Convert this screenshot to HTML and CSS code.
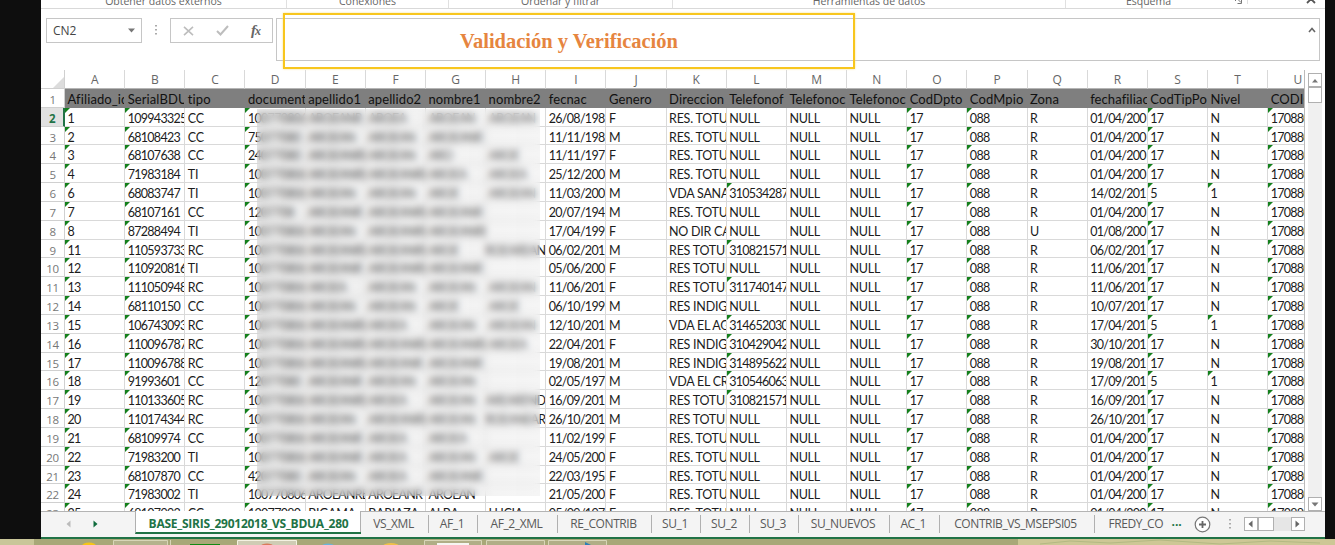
FILE: index.html
```html
<!DOCTYPE html>
<html lang="es">
<head>
<meta charset="utf-8">
<title>BASE_SIRIS_29012018_VS_BDUA_280</title>
<link rel="stylesheet" href="styles.css">
</head>
<body>
<main class="window">
  <div class="ribbon">
    <span class="group g1">Obtener datos externos</span>
    <span class="group g2">Conexiones</span>
    <span class="group g3">Ordenar y filtrar</span>
    <span class="group g4">Herramientas de datos</span>
    <span class="group g5">Esquema</span>
    <span class="launcher"><svg width="8" height="8" viewBox="0 0 8 8"><path d="M.5 4V.5H4M3 2.5l3 3M6.5 2.5v4h-4" fill="none" stroke="#777"/></svg></span>
    <svg class="collapse" width="10" height="6" viewBox="0 0 10 6"><path d="M1 5l4-4 4 4" fill="none" stroke="#555" stroke-width="1.8"/></svg>
  </div>
  <div class="formula">
    <div class="namebox"><span>CN2</span><svg width="8" height="5" viewBox="0 0 8 5"><path d="M0 .5h7L3.500 4.500z" fill="#777"/></svg></div>
    <svg class="grip" width="3" height="12" viewBox="0 0 3 12"><path d="M1 1h2v1.500H1zM1 5h2v1.500H1zM1 9h2v1.500H1z" fill="#aaa"/></svg>
    <div class="fbuttons">
      <svg width="11" height="10" viewBox="0 0 11 10"><path d="M1 .8l9 8.400M10 .8L1 9.200" stroke="#bdbdbd" stroke-width="1.600"/></svg>
      <svg width="13" height="11" viewBox="0 0 13 11"><path d="M1 6l3.500 3.500L12 1" fill="none" stroke="#bdbdbd" stroke-width="2"/></svg>
      <span class="fx">f<small>x</small></span>
    </div>
    <div class="finput"><svg width="8" height="6" viewBox="0 0 8 6"><path d="M1 5l3-3.500L7 5" fill="none" stroke="#666" stroke-width="1.600"/></svg></div>
    <div class="callout">Validación y Verificación</div>
  </div>
  <div class="workarea">
    <div class="sheet" id="sheet"></div>
    <div class="vscroll">
      <span class="sbtn"><svg width="8" height="5" viewBox="0 0 8 5"><path d="M1 4.500L4 1l3 3.500z" fill="#777"/></svg></span>
      <span class="vthumb"></span>
      <span class="vtrack"></span>
      <span class="sbtn"><svg width="8" height="5" viewBox="0 0 8 5"><path d="M.5.500h7L4 4.500z" fill="#777"/></svg></span>
    </div>
  </div>
  <div class="tabs">
    <div class="nav">
      <svg width="5" height="8" viewBox="0 0 5 8"><path d="M4.500.5v7L.5 4z" fill="#bbb"/></svg>
      <svg width="5" height="8" viewBox="0 0 5 8"><path d="M.5.5v7l4-3.500z" fill="#0f6b3c"/></svg>
    </div>
    <div class="tab active">BASE_SIRIS_29012018_VS_BDUA_280</div>
    <div class="tab w68">VS_XML</div>
    <div class="tab w49">AF_1</div>
    <div class="tab w80">AF_2_XML</div>
    <div class="tab w94">RE_CONTRIB</div>
    <div class="tab w49">SU_1</div>
    <div class="tab w49">SU_2</div>
    <div class="tab w49">SU_3</div>
    <div class="tab w91">SU_NUEVOS</div>
    <div class="tab w50">AC_1</div>
    <div class="tab w155">CONTRIB_VS_MSEPSI05</div>
    <div class="tab last"><span>FREDY_CO</span></div>
    <span class="more">...</span>
    <svg class="add" width="17" height="17" viewBox="0 0 17 17"><circle cx="8.500" cy="8.500" r="7.300" fill="#fff" stroke="#777" stroke-width="1.200"/><path d="M8.500 5v7M5 8.500h7" stroke="#666" stroke-width="1.800"/></svg>
    <svg class="grip2" width="3" height="12" viewBox="0 0 3 12"><path d="M1 1h2v1.500H1zM1 5h2v1.500H1zM1 9h2v1.500H1z" fill="#aaa"/></svg>
    <div class="hscroll">
      <span class="sbtn"><svg width="5" height="8" viewBox="0 0 5 8"><path d="M4.500.5v7L.5 4z" fill="#666"/></svg></span>
      <span class="hthumb"></span>
      <span class="htrack"></span>
      <span class="sbtn"><svg width="5" height="8" viewBox="0 0 5 8"><path d="M.5.5v7l4-3.500z" fill="#666"/></svg></span>
    </div>
  </div>
</main>
<footer class="taskbar">
  <svg width="1335" height="6" viewBox="0 0 1335 6">
    <rect width="1335" height="6" fill="#a8a878"/>
    <rect width="34" height="6" fill="#c9c699"/>
    <path d="M1018 0h317v6h-317z" fill="#cdc795"/>
    <path d="M1040 5l30-3 40 2 50-3 60 4 50-3 50 2" stroke="#b3b982" fill="none"/>
    <ellipse cx="89" cy="7" rx="7" ry="3.500" fill="#f5c518"/>
    <path d="M113.500 6V1.500h54V6M170.500 1v5" fill="#b5b38d" stroke="#d8d6b8"/>
    <rect x="190" y="5" width="30" height="1" fill="#128a12"/>
    <path d="M237.500 6V1.500h59V6" fill="#cfccb4" stroke="#f4f2e2"/>
    <ellipse cx="267" cy="7" rx="6" ry="2.500" fill="#d97a5a"/>
    <ellipse cx="328" cy="7" rx="6" ry="2.500" fill="#69b4d8"/>
    <ellipse cx="391" cy="7" rx="8" ry="3" fill="#efc04a"/>
    <path d="M424.500 6V1.500h57V6M486.500 6V1.500h58V6M548.500 6V1.500h58V6" fill="#b0ae86" stroke="#d8d6b8"/>
    <rect x="437" y="4" width="32" height="2" fill="#f6f6f2"/>
    <path d="M585 3l6 3h-6z" fill="#2d7fb5"/>
  </svg>
</footer>
<script src="sheet.js"></script>
</body>
</html>
```
FILE: styles.css
```css
* { box-sizing: border-box; }
body {
  margin: 0;
  width: 1335px;
  height: 545px;
  overflow: hidden;
  background: #0e0e0e;
  font-family: "Open Sans", "Noto Sans", sans-serif;
  color: #222;
}
svg { display: block; flex: none; }
.window {
  margin-left: 41px;
  width: 1284px;
  height: 539px;
  background: #fff;
  border-bottom: 2px solid #217346;
  display: flex;
  flex-direction: column;
}
.taskbar { height: 6px; }

/* ribbon */
.ribbon {
  height: 9px;
  flex: none;
  display: flex;
  border-bottom: 1px solid #d9d9d9;
  overflow: hidden;
  font-size: 10.5px;
  line-height: 14px;
  color: #666;
}
.group {
  height: 14px;
  margin-top: -6px;
  text-align: center;
  flex: none;
  border-right: 1px solid #e0e0e0;
  white-space: nowrap;
}
.g1 { width: 246px; }
.g2 { width: 162px; }
.g3 { width: 224px; }
.g4 { width: 393px; }
.g5 { width: 165px; border-right: 0; }
.launcher { width: 17px; margin-top: -3px; padding-left: 4px; height: 7px; border-right: 1px solid #e0e0e0; }
.collapse { margin: -2px 0 0 58px; }

/* formula bar */
.formula {
  position: relative;
  height: 61px;
  flex: none;
  display: flex;
  padding: 9px 5px 0 5px;
}
.namebox {
  width: 96px;
  height: 25px;
  border: 1px solid #c6c6c6;
  display: flex;
  align-items: center;
  justify-content: space-between;
  padding: 0 5px 0 6px;
  font-size: 12px;
  color: #444;
}
.grip { margin: 6px 13px 0 12px; }
.fbuttons {
  width: 103px;
  height: 25px;
  border: 1px solid #c6c6c6;
  display: flex;
  align-items: center;
  padding-left: 12px;
  gap: 22px;
}
.fx { font: italic bold 15px/20px "Liberation Serif", serif; color: #666; letter-spacing: -1px; }
.fx small { font-size: 12px; }
.finput {
  margin-left: 3px;
  flex: 1;
  height: 43px;
  border: 1px solid #c6c6c6;
  display: flex;
  justify-content: flex-end;
  padding: 8px 3px 0 0;
}
.callout {
  position: absolute;
  left: 242px;
  top: 4px;
  width: 572px;
  height: 56px;
  border: 2px solid #f8c61e;
  box-shadow: 0 0 2px #f6e28a;
  font: bold 20.5px/53px "Liberation Serif", serif;
  color: #e6853f;
  text-align: center;
}

/* grid */
.workarea { height: 441px; flex: none; display: flex; }
.sheet {
  position: relative;
  width: 1264px;
  height: 441px;
  overflow: hidden;
  border-right: 1px solid #bbb;
  font-family: Lato, sans-serif;
  font-size: 12.5px;
}
.line { display: grid; grid-template-columns: 24px repeat(21, 60.16px); height: 18.83px; }
.line.letters { height: 19px; }
.cell {
  position: relative;
  min-width: 0;
  overflow: hidden;
  white-space: pre;
  padding-left: 2.5px;
  line-height: 21px;
  border-right: 1px solid #d9d9d9;
  border-bottom: 1px solid #d9d9d9;
  color: #1c1c1c;
  letter-spacing: -0.25px;
}
.num { letter-spacing: -0.7px; }
.name { letter-spacing: -0.8px; }
.tail { direction: rtl; padding: 0; }
.flag::before {
  content: "";
  position: absolute;
  left: 0;
  top: 0;
  border-top: 5px solid #14801c;
  border-right: 5px solid transparent;
}
.titles .cell { background: #7f7f7f; border-color: #7f7f7f; color: #111; font-size: 13px; letter-spacing: 0.1px; }
.letters .cell {
  text-align: center;
  padding: 0;
  font: 12px/20px "Open Sans", sans-serif;
  color: #666;
  border-bottom-color: #b5b5b5;
}
.line .index {
  background: #fff;
  font: 11.5px/21px "Open Sans", sans-serif;
  letter-spacing: -0.4px;
  text-align: center;
  padding: 0;
  color: #777;
  border-color: #d0d0d0;
}
.line .index.current {
  background: #e1e1e1;
  color: #217346;
  font-weight: 700;
  border-right: 2px solid #217346;
}
.corner { display: flex; align-items: flex-end; justify-content: flex-end; padding: 0 3px 3px 0; }
.redacted {
  position: absolute;
  left: 216px;
  top: 39px;
  width: 283px;
  height: 387px;
  background: linear-gradient(90deg, rgba(190,190,190,.28), rgba(222,222,222,.3));
  backdrop-filter: blur(3.5px);
}

/* scroll bars */
.vscroll {
  width: 14px;
  margin: 3px 0 0 3px;
  display: flex;
  flex-direction: column;
}
.sbtn {
  width: 14px;
  height: 14px;
  flex: none;
  border: 1px solid #b0b0b0;
  background: #fff;
  display: flex;
  align-items: center;
  justify-content: center;
}
.vthumb { height: 16px; border: 1px solid #b0b0b0; background: #fff; }
.vtrack { flex: 1; background: #f0f0f0; }

/* sheet tabs */
.tabs {
  flex: 1;
  display: flex;
  background: #f4f4f4;
  border-top: 1px solid #b4b4b4;
  font-size: 12px;
  color: #595959;
}
.nav { width: 94px; display: flex; gap: 22px; padding: 8px 0 0 25px; }
.tab {
  position: relative;
  height: 22px;
  line-height: 23px;
  padding-right: 3px;
  text-align: center;
  white-space: nowrap;
  letter-spacing: -0.4px;
  flex: none;
}
.tab::after {
  content: "";
  position: absolute;
  right: 0;
  top: 3px;
  height: 18px;
  border-right: 1px solid #b0b0b0;
}
.tab.active {
  width: 226px;
  margin-top: -1px;
  height: 23px;
  padding-right: 0;
  background: #fff;
  border-left: 1px solid #b0b0b0;
  border-bottom: 2px solid #217346;
  color: #217346;
  font-weight: 700;
  font-size: 12px;
  line-height: 25px;
  letter-spacing: -0.25px;
}
.tab.active::after { top: 0; height: 21px; }
.w49 { width: 49px; }
.w50 { width: 49.5px; }
.w68 { width: 68px; }
.w80 { width: 80px; }
.w91 { width: 91px; }
.w94 { width: 94px; }
.w155 { width: 155px; }
.tab.last { width: 70px; padding-left: 14px; text-align: left; }
.tab.last::after { display: none; }
.last span { display: block; width: 55px; overflow: hidden; }
.more { width: 11px; margin-left: 7px; color: #217346; font-weight: 700; line-height: 20px; }
.add { margin: 4px 0 0 11px; }
.grip2 { margin: 6px 0 0 17px; }
.hscroll { display: flex; height: 14px; margin: 5px 0 0 13px; }
.hthumb { width: 16px; border: 1px solid #b0b0b0; background: #fff; }
.htrack { width: 17px; background: #e6e6e6; }
```
FILE: sheet.js
```js
const titles = ["Afiliado_id", "SerialBDU", "tipo", "document", "apellido1", "apellido2", "nombre1", "nombre2", "fecnac", "Genero", "Direccion", "Telefonof", "Telefonoc", "Telefonoc", "CodDpto", "CodMpio", "Zona", "fechafiliac", "CodTipPol", "Nivel", "CODIGO"];
// id | serial | tipo | documento prefix | masked lengths | fecnac | genero | direccion | telefono | zona | afiliacion | poblacion | nivel
const rows = [
  "1|109943325|CC|10|9,7,5,6,6|26/08/198|F|RES. TOTU|NULL|R|01/04/200|17|N",
  "2|68108423|CC|75|6,6,6,7,0|11/11/198|M|RES. TOTU|NULL|R|01/04/200|17|N",
  "3|68107638|CC|24|6,8,6,3,4|11/11/197|F|RES. TOTU|NULL|R|01/04/200|17|N",
  "4|71983184|TI|10|9,8,8,5,5|25/12/200|M|RES. TOTU|NULL|R|01/04/200|17|N",
  "6|68083747|TI|10|9,6,6,4,6|11/03/200|M|VDA SANAM|310534287|R|14/02/201|5|1",
  "7|68107161|CC|12|5,7,8,7,0|20/07/194|M|RES. TOTU|NULL|R|01/04/200|17|N",
  "8|87288494|TI|10|9,6,8,8,0|17/04/199|F|NO DIR CAS|NULL|U|01/08/200|17|N",
  "11|110593733|RC|10|9,8,8,4,9|06/02/201|M|RES TOTUM|310821571|R|06/02/201|17|N",
  "12|110920816|TI|10|9,7,8,7,0|05/06/200|F|RES TOTUM|NULL|R|11/06/201|17|N",
  "13|111050948|RC|10|9,5,6,6,6|11/06/201|F|RES TOTUM|311740147|R|11/06/201|17|N",
  "14|68110150|CC|10|9,6,6,4,4|06/10/199|M|RES INDIGE|NULL|R|10/07/201|17|N",
  "15|106743093|RC|10|9,8,5,6,6|12/10/201|M|VDA EL AGU|314652030|R|17/04/201|5|1",
  "16|110096787|RC|10|9,8,8,8,5|22/04/201|F|RES INDIGE|310429042|R|30/10/201|17|N",
  "17|110096788|RC|10|9,8,7,7,0|19/08/201|M|RES INDIGE|314895622|R|19/08/201|17|N",
  "18|91993601|CC|12|6,7,6,6,0|02/05/197|M|VDA EL CRE|310546063|R|17/09/201|5|1",
  "19|110133605|RC|10|9,8,5,6,8|16/09/201|M|RES TOTUM|310821571|R|16/09/201|17|N",
  "20|110174344|RC|10|9,6,8,6,9|26/10/201|M|RES TOTUM|NULL|R|26/10/201|17|N",
  "21|68109974|CC|10|9,7,5,5,0|11/02/199|F|RES. TOTU|NULL|R|01/04/200|17|N",
  "22|71983200|TI|10|9,7,5,6,4|24/05/200|F|RES. TOTU|NULL|R|01/04/200|17|N",
  "23|68107870|CC|42|6,6,5,7,0|22/03/195|F|RES. TOTU|NULL|R|01/04/200|17|N",
  "24|71983002|TI|10|9,8,7,6,0|21/05/200|F|RES. TOTU|NULL|R|01/04/200|17|N",
  "25|68107993|CC|12|6,6,7,4,5|05/09/197|F|RES. TOTU|NULL|R|01/04/200|17|N"
];
const sheet = document.getElementById("sheet");
const filler = n => "AROEANREAOA".slice(0, n);
const digits = n => "077080650".slice(0, n);
// names cut short by the right edge of their column
const tails = { 7: "AROEAREAN", 15: "AREAREND", 16: "AROEANEAR" };
// row only partly in view at the bottom of the sheet
const bottom = ["BIGAMA", "BARIAZA", "ALBA", "LUCIA"];

function line(cls, index, cells, current) {
  const el = document.createElement("div");
  el.className = "line " + cls;
  const head = document.createElement("div");
  head.className = "cell index" + (current ? " current" : "");
  if (index === "") {
    head.classList.add("corner");
    head.innerHTML = '<svg width="11" height="11" viewBox="0 0 11 11"><path d="M11 0v11H0z" fill="#dcdcdc"/></svg>';
  } else {
    head.textContent = index;
  }
  el.append(head);
  cells.forEach(([text, extra]) => {
    const c = document.createElement("div");
    c.className = "cell " + (extra || "");
    c.textContent = text;
    el.append(c);
  });
  sheet.append(el);
}

line("letters", "", [..."ABCDEFGHIJKLMNOPQRSTU"].map(t => [t]));
line("titles", "1", titles.map(t => [t]));
rows.forEach((r, i) => {
  const [id, serial, tipo, doc, mask, born, sex, addr, phone, zone, joined, pop, level] = r.split("|");
  const m = mask.split(",").map(Number);
  const names = i === 21
    ? bottom.map(t => [t])
    : [1, 2, 3, 4].map(k => k === 4 && tails[i] ? [tails[i], "name tail"] : [filler(m[k]), "name"]);
  line("", String(i + 2), [
    [id, "num flag"], [serial, "num flag"], [tipo], [doc + digits(m[0]), "num flag"],
    ...names,
    [born, "num"], [sex], [addr], [phone, phone === "NULL" ? "" : "num flag"], ["NULL"], ["NULL"],
    ["17", "num flag"], ["088", "num flag"], [zone], [joined, "num"], [pop, "num flag"],
    [level, level === "1" ? "num flag" : ""], ["170880", "num flag"]
  ], i === 0);
});
const mask = document.createElement("div");
mask.className = "redacted";
sheet.append(mask);
```
